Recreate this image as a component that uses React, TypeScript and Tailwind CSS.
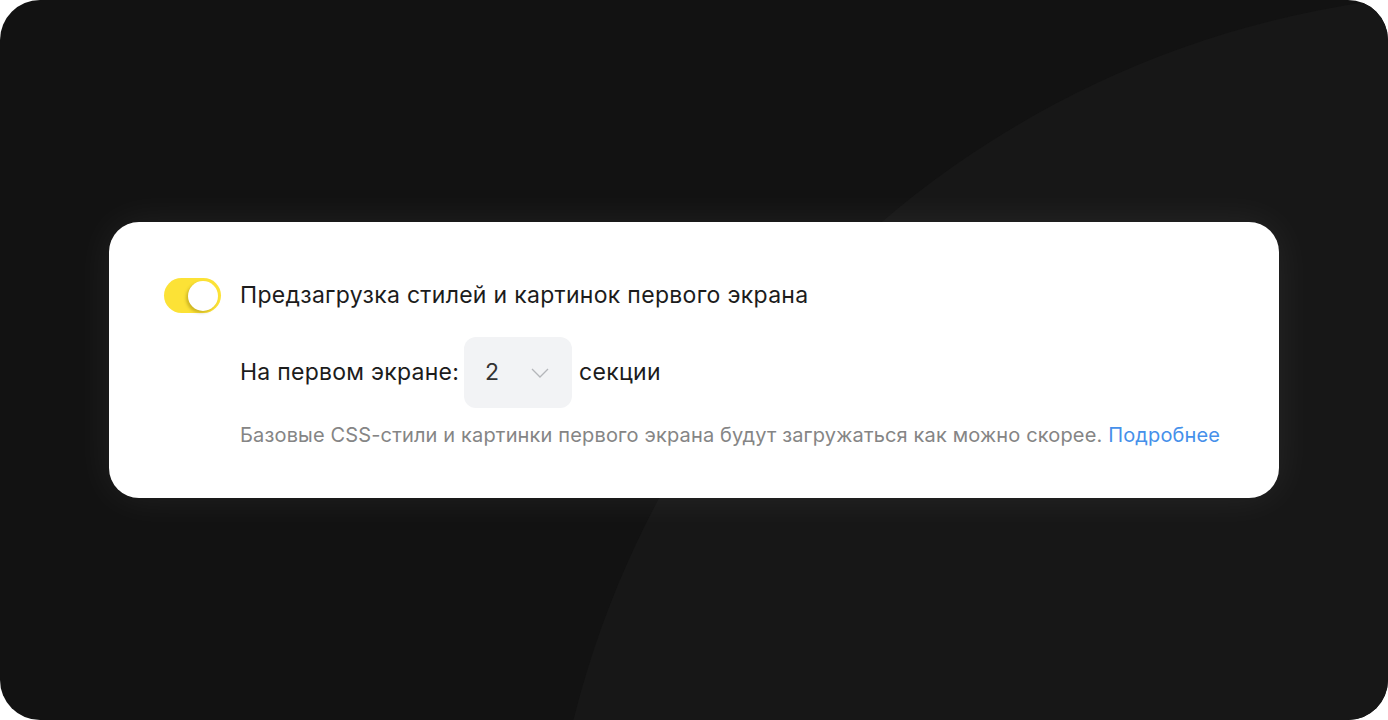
import React from "react";

export default function App() {
  return (
    <div className="w-[1388px] h-[720px] bg-white">
      <div className="relative w-full h-full rounded-[40px] bg-[#121212] overflow-hidden flex items-center justify-center font-['Inter',sans-serif]">
        <div className="absolute left-[545px] top-[-8px] w-[1920px] h-[1920px] rounded-full bg-[#171717]" />
        <div className="relative w-[1170px] h-[276px] rounded-[30px] bg-white shadow-[0_0_40px_rgba(255,255,255,0.07)] pl-[55px] pt-[56px] flex flex-col">
          <div className="flex items-center">
            <div className="w-[57px] h-[35px] rounded-full bg-[#fce236] flex items-center justify-end pr-[3px]">
              <div className="w-[30px] h-[30px] rounded-full bg-white shadow-[-2px_2px_3px_rgba(120,100,0,0.35)]" />
            </div>
            <span className="ml-[19px] text-[23px] tracking-[0.3px] text-[#1c1c1c] leading-none">
              Предзагрузка стилей и картинок первого экрана
            </span>
          </div>
          <div className="flex items-center ml-[76px] mt-[24px]">
            <span className="text-[23px] tracking-[0.25px] text-[#1c1c1c] leading-none">На первом экране:</span>
            <div className="ml-[5px] w-[108px] h-[71px] rounded-[12px] bg-[#f2f3f5] flex items-center pl-[21px]">
              <span className="text-[23px] text-[#333] leading-none">2</span>
              <svg className="ml-[32px]" width="18" height="10" viewBox="0 0 18 10" fill="none">
                <path d="M1 1l8 8 8-8" stroke="#b4b6ba" strokeWidth="1.3" />
              </svg>
            </div>
            <span className="ml-[7px] text-[23px] tracking-[0.3px] text-[#1c1c1c] leading-none">секции</span>
          </div>
          <div className="ml-[76px] mt-[15px] text-[20px] leading-[24px] tracking-[0.15px] text-[#858585]">
            Базовые CSS-стили и картинки первого экрана будут загружаться как можно скорее.{" "}
            <span className="text-[#4690ea]">Подробнее</span>
          </div>
        </div>
      </div>
    </div>
  );
}
